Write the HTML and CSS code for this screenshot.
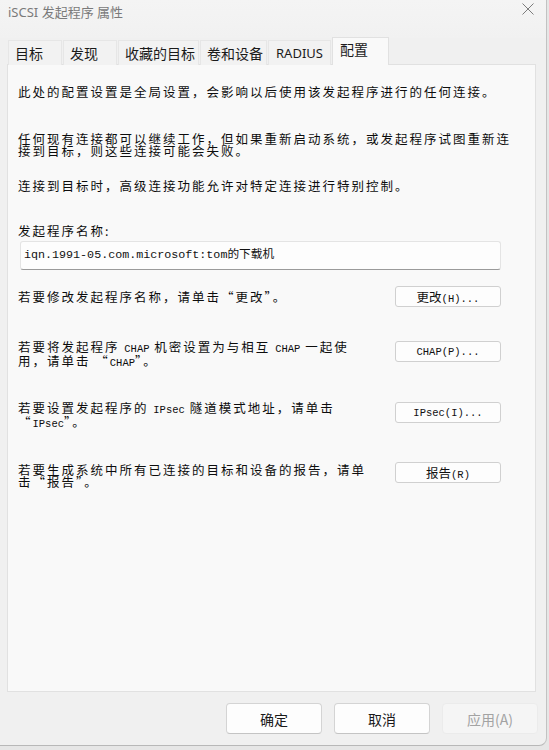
FILE: index.html
```html
<!DOCTYPE html>
<html lang="zh-CN">
<head>
    <meta charset="UTF-8">
    <meta name="viewport" content="width=device-width, initial-scale=1.0">
    <title>iSCSI 发起程序 属性</title>
    <link rel="stylesheet" href="styles.css">
</head>
<body>
    <div class="window">
        <div class="titlebar">
            <span class="title">iSCSI 发起程序 属性</span>
            <svg class="close" width="12" height="12" viewBox="0 0 12 12">
                <path d="M0.5 0.5 L11.5 11.5 M11.5 0.5 L0.5 11.5" stroke="#7c7c7c" stroke-width="1" fill="none"/>
            </svg>
        </div>

        <div class="tabs">
            <div class="tab">目标</div>
            <div class="tab">发现</div>
            <div class="tab">收藏的目标</div>
            <div class="tab">卷和设备</div>
            <div class="tab tab-latin">RADIUS</div>
            <div class="tab active">配置</div>
        </div>

        <div class="panel">
            <p class="intro">此处的配置设置是全局设置，会影响以后使用该发起程序进行的任何连接。</p>
            <p class="note">任何现有连接都可以继续工作，但如果重新启动系统，或发起程序试图重新连<br>接到目标，则这些连接可能会失败。</p>
            <p class="note-tight">连接到目标时，高级连接功能允许对特定连接进行特别控制。</p>

            <label class="field-label">发起程序名称:</label>
            <div class="name-box"><span class="mono">iqn.1991-05.com.microsoft:tom</span>的下载机</div>

            <div class="row row-first">
                <p class="row-text">若要修改发起程序名称，请单击“更改”。</p>
                <button class="small-btn"><span class="cjk">更改</span>(H)...</button>
            </div>

            <div class="row">
                <p class="row-text">若要将发起程序 <span class="latin">CHAP</span> 机密设置为与相互 <span class="latin">CHAP</span> 一起使<br>用，请单击 “<span class="latin">CHAP</span>”。</p>
                <button class="small-btn">CHAP(P)...</button>
            </div>

            <div class="row row-third">
                <p class="row-text">若要设置发起程序的 <span class="latin">IPsec</span> 隧道模式地址，请单击<br>“<span class="latin">IPsec</span>”。</p>
                <button class="small-btn">IPsec(I)...</button>
            </div>

            <div class="row row-last">
                <p class="row-text">若要生成系统中所有已连接的目标和设备的报告，请单<br>击“报告”。</p>
                <button class="small-btn"><span class="cjk">报告</span>(R)</button>
            </div>
        </div>

        <div class="footer">
            <button class="btn">确定</button>
            <button class="btn">取消</button>
            <button class="btn" disabled>应用(A)</button>
        </div>
    </div>
</body>
</html>
```

FILE: styles.css
```css
* {
    margin: 0;
    padding: 0;
    box-sizing: border-box;
}

body {
    background: #e6e6e6;
    font-family: "Noto Sans CJK SC", sans-serif;
    color: #111;
}

.window {
    width: 547px;
    height: 746px;
    background: #f0f0f0;
    border-right: 1px solid #c2c2c2;
    border-bottom: 1px solid #b8b8b8;
    border-bottom-right-radius: 8px;
    overflow: hidden;
}

/* title bar */
.titlebar {
    height: 38px;
    display: flex;
    align-items: flex-start;
    justify-content: space-between;
    padding: 0 12px 0 8px;
    background: linear-gradient(#f4f4f4, #f1f1f1);
}

.title {
    font-family: "Noto Sans", "Noto Sans CJK SC", sans-serif;
    font-size: 13px;
    line-height: 24px;
    color: #7a7a7a;
}

.close {
    margin-top: 3px;
}

/* tabs */
.tabs {
    display: flex;
    align-items: flex-end;
    height: 27px;
    padding-left: 8px;
    margin-bottom: -1px;
}

.tab {
    min-width: 54px;
    height: 25px;
    padding: 0 3px 0 6px;
    margin-right: 1px;
    font-size: 14px;
    line-height: 24px;
    color: #1b1b1b;
    background: #f2f2f2;
    border: 1px solid #e6e6e6;
    border-bottom: none;
}

.tab-latin {
    font-family: "Noto Sans", sans-serif;
    font-size: 13px;
    padding-left: 7px;
    min-width: 63px;
}

.tab.active {
    position: relative;
    min-width: 57px;
    height: 28px;
    padding-left: 7px;
    line-height: 23px;
    background: #f9f9f9;
    border-color: #e1e1e1;
}

/* panel */
.panel {
    height: 628px;
    margin: 0 10px 0 7px;
    padding: 21px 34px 0 10px;
    background: #f9f9f9;
    border: 1px solid #e1e1e1;
}

.panel p,
.field-label {
    font-size: 12.5px;
    letter-spacing: 2px;
    line-height: 12px;
    white-space: nowrap;
    color: #0d0d0d;
}

.note {
    margin-top: 35px;
}

.note-tight {
    margin-top: 23px;
}

.field-label {
    display: block;
    margin-top: 33px;
}

.name-box {
    margin: 4px 0 0 2px;
    height: 29px;
    padding: 5px 0 0 3px;
    background: #fdfdfd;
    border: 1px solid #e4e4e4;
    border-bottom-color: #9a9a9a;
    border-radius: 3px;
    font-size: 11.7px;
    line-height: 12px;
    color: #111;
}

.mono {
    font-family: "Liberation Mono", monospace;
}

.latin {
    font-family: "Liberation Mono", monospace;
    font-size: 10.5px;
    letter-spacing: 0;
}

/* rows with a button on the right */
.row {
    display: flex;
    justify-content: space-between;
    align-items: flex-start;
    margin-top: 34px;
}

.row-first {
    margin-top: 16px;
    align-items: center;
}

.row-third {
    margin-top: 33px;
}

.row-last {
    margin-top: 32px;
}

.row-last .row-text {
    padding-top: 2px;
}

.small-btn {
    width: 106px;
    height: 21px;
    background: #fdfdfd;
    border: 1px solid #d0d0d0;
    border-radius: 3px;
    font-family: "Liberation Mono", "Noto Sans CJK SC", monospace;
    font-size: 10.5px;
    color: #111;
}

.small-btn .cjk {
    font-family: "Noto Sans CJK SC", sans-serif;
    font-size: 12.5px;
}

/* bottom buttons */
.footer {
    display: flex;
    justify-content: flex-end;
    gap: 12px;
    padding: 11px 8px 0 0;
}

.btn {
    width: 96px;
    height: 31px;
    background: #fdfdfd;
    border: 1px solid #d4d4d4;
    border-bottom-color: #c4c4c4;
    border-radius: 4px;
    font-family: "Noto Sans CJK SC", sans-serif;
    font-size: 14px;
    color: #1a1a1a;
}

.btn:disabled {
    background: #f5f5f5;
    border-color: #ebebeb;
    color: #a3a3a3;
}
```
